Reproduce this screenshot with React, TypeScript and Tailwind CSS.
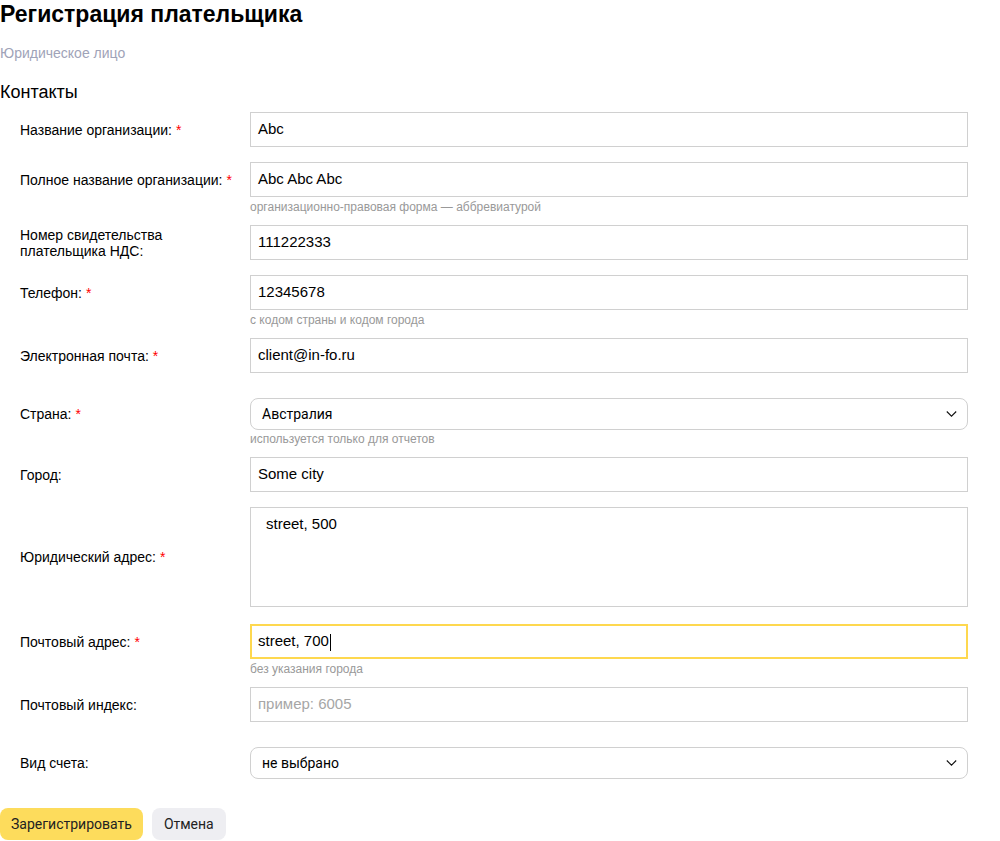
import React from 'react';

const font = { fontFamily: '"Liberation Sans", Arial, sans-serif' };

function Star() {
  return <span className="text-[#ff0000] ml-1">*</span>;
}

function Chevron() {
  return (
    <svg width="11" height="7" viewBox="0 0 11 7" className="absolute right-[10px] top-1/2 -translate-y-1/2">
      <path d="M0.8 1 L5.5 5.7 L10.2 1" fill="none" stroke="#111" strokeWidth="1.1" />
    </svg>
  );
}

type RowProps = {
  label: React.ReactNode;
  required?: boolean;
  hint?: string;
  hintMt?: string;
  mb: string;
  children: React.ReactNode;
};

function Row({ label, required, hint, hintMt = 'mt-[4px]', mb, children }: RowProps) {
  return (
    <div className={mb}>
      <div className="flex items-center">
        <div className="w-[250px] pl-5 pr-4 text-[14px] leading-[16px] text-[#000]">
          {label}
          {required && <Star />}
        </div>
        <div className="w-[718px]">{children}</div>
      </div>
      {hint && <div className={`ml-[250px] ${hintMt} text-[12px] leading-[13px] text-[#999]`}>{hint}</div>}
    </div>
  );
}

function TextInput({ value, placeholder, focused }: { value?: string; placeholder?: string; focused?: boolean }) {
  return (
    <div
      className={
        focused
          ? 'h-[35px] border-2 border-[#fed84f] flex items-center px-[6px] text-[15px] text-black'
          : 'h-[35px] border border-[#d0d0d0] flex items-center px-[7px] text-[15px] text-black'
      }
    >
      {value ? (
        <span>
          {value}
          {focused && <span className="inline-block w-px h-[17px] bg-black align-middle ml-[1px]" />}
        </span>
      ) : (
        <span className="text-[#a6a6a6]">{placeholder}</span>
      )}
    </div>
  );
}

function Select({ value }: { value: string }) {
  return (
    <div className="relative h-[32px] border border-[#d0d0d0] rounded-[8px] flex items-center pl-[11px] text-[14px] text-black" style={{ fontFamily: 'Roboto, Arial, sans-serif' }}>
      {value}
      <Chevron />
    </div>
  );
}

export default function App() {
  return (
    <div className="bg-white min-h-screen w-[1000px] text-black" style={font}>
      <h1 className="text-[23px] leading-[28px] font-bold">Регистрация плательщика</h1>
      <div className="mt-[17px] text-[14px] leading-[16px] text-[#9fa3b8]">Юридическое лицо</div>
      <div className="mt-[20px] text-[18px] leading-[22px]">Контакты</div>

      <div className="mt-[9px]">
        <Row label="Название организации:" required mb="mb-[15px]">
          <TextInput value="Abc" />
        </Row>
        <Row label="Полное название организации:" required hint="организационно-правовая форма — аббревиатурой" mb="mb-[11px]">
          <TextInput value="Abc Abc Abc" />
        </Row>
        <Row
          label={
            <>
              Номер свидетельства
              <br />
              плательщика НДС:
            </>
          }
          mb="mb-[15px]"
        >
          <TextInput value="111222333" />
        </Row>
        <Row label="Телефон:" required hint="с кодом страны и кодом города" mb="mb-[11px]">
          <TextInput value="12345678" />
        </Row>
        <Row label="Электронная почта:" required mb="mb-[25px]">
          <TextInput value="client@in-fo.ru" />
        </Row>
        <Row label="Страна:" required hint="используется только для отчетов" hintMt="mt-[3px]" mb="mb-[11px]">
          <Select value="Австралия" />
        </Row>
        <Row label="Город:" mb="mb-[15px]">
          <TextInput value="Some city" />
        </Row>
        <Row label="Юридический адрес:" required mb="mb-[17px]">
          <div className="h-[100px] border border-[#d0d0d0] px-[15px] pt-[6px] text-[15px] leading-[20px]">street, 500</div>
        </Row>
        <Row label="Почтовый адрес:" required hint="без указания города" mb="mb-[11px]">
          <TextInput value="street, 700" focused />
        </Row>
        <Row label="Почтовый индекс:" mb="mb-[25px]">
          <TextInput placeholder="пример: 6005" />
        </Row>
        <Row label="Вид счета:" mb="mb-[29px]">
          <Select value="не выбрано" />
        </Row>
      </div>

      <div className="flex gap-[9px]" style={{ fontFamily: 'Roboto, Arial, sans-serif' }}>
        <button className="h-[32px] px-[11px] rounded-[8px] bg-[#fddc5c] text-[14px] text-[#222]">Зарегистрировать</button>
        <button className="h-[32px] px-[12px] rounded-[8px] bg-[#eeeef2] text-[14px] text-[#222]">Отмена</button>
      </div>
    </div>
  );
}
